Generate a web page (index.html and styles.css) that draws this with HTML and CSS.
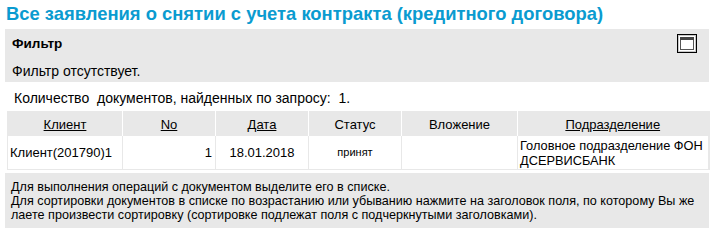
FILE: index.html
```html
<!DOCTYPE html>
<html lang="ru">
<head>
<meta charset="utf-8">
<title>Все заявления</title>
<link rel="stylesheet" href="styles.css">
</head>
<body>
<h1 class="title">Все заявления о снятии с учета контракта (кредитного договора)</h1>
<div class="filter">
  <div class="filter-head">
    <span class="filter-name">Фильтр</span>
    <svg class="filter-icon" width="20" height="19" viewBox="0 0 20 19">
      <rect x="0.5" y="0.5" width="19" height="18" fill="#fff" stroke="#000"/>
      <rect x="1.5" y="1.5" width="17" height="16" fill="none" stroke="#c8c8c8"/>
      <rect x="3.5" y="3.5" width="13" height="12" fill="#fff" stroke="#555"/>
      <rect x="3" y="3" width="14" height="3" fill="#444"/>
    </svg>
  </div>
  <div class="filter-text">Фильтр отсутствует.</div>
</div>
<div class="count">Количество&nbsp; документов, найденных по запросу:&nbsp; 1.</div>
<table class="grid">
  <colgroup>
    <col class="c-client"><col class="c-no"><col class="c-date"><col class="c-status"><col class="c-att"><col class="c-dept">
  </colgroup>
  <thead>
    <tr>
      <th><span class="sort">Клиент</span></th>
      <th><span class="sort">No</span></th>
      <th><span class="sort">Дата</span></th>
      <th>Статус</th>
      <th>Вложение</th>
      <th><span class="sort">Подразделение</span></th>
    </tr>
  </thead>
  <tbody>
    <tr>
      <td>Клиент(201790)1</td>
      <td class="num">1</td>
      <td class="center">18.01.2018</td>
      <td class="center small">принят</td>
      <td></td>
      <td class="dept">Головное подразделение ФОН ДСЕРВИСБАНК</td>
    </tr>
  </tbody>
</table>
<div class="hint">
  Для выполнения операций с документом выделите его в списке.<br>
  Для сортировки документов в списке по возрастанию или убыванию нажмите на заголовок поля, по которому Вы же лаете произвести сортировку (сортировке подлежат поля с подчеркнутыми заголовками).
</div>
</body>
</html>
```

FILE: styles.css
```css
html, body {
  margin: 0;
  padding: 0;
  background: #fff;
  font-family: "Liberation Sans", Arial, sans-serif;
  color: #000;
}
.title {
  margin: 0;
  padding: 3px 0 0 6px;
  height: 26px;
  font-size: 18.4px;
  line-height: 22px;
  font-weight: bold;
  color: #0a9bd0;
  white-space: nowrap;
}
.filter {
  margin: 0 2px 0 5px;
  background: #e8e8e8;
  height: 53px;
}
.filter-head {
  display: flex;
  justify-content: space-between;
  align-items: center;
  height: 28px;
  padding: 0 12px 0 7px;
}
.filter-name {
  font-size: 13.5px;
  font-weight: bold;
  padding-top: 1px;
}
.filter-icon {
  display: block;
  margin-top: 1px;
}
.filter-text {
  font-size: 14px;
  line-height: 16px;
  padding: 6px 0 0 7px;
}
.count {
  font-size: 14px;
  line-height: 16px;
  padding: 8px 0 0 14px;
  height: 21px;
}
.grid {
  margin: 0 2px 0 7px;
  width: 702px;
  table-layout: fixed;
  border-collapse: collapse;
  border: 1px solid #e8e8e8;
  border-right-width: 2px;
  font-size: 13px;
}
.c-client { width: 115px; }
.c-no { width: 93px; }
.c-date { width: 93px; }
.c-status { width: 93px; }
.c-att { width: 116px; }
.c-dept { width: 191px; }
.grid th {
  background: #e8e8e8;
  font-weight: normal;
  height: 24px;
  padding: 0 2px;
  text-align: center;
  border-right: 1px solid #fff;
  line-height: 15px;
}
.grid th:last-child { border-right: none; }
.sort { text-decoration: underline; }
.grid td {
  background: #fff;
  height: 31px;
  padding: 0 2px;
  border-right: 1px solid #e8e8e8;
  border-bottom: 1px solid #e8e8e8;
  line-height: 15px;
  vertical-align: middle;
}
.grid td.num { text-align: right; padding-right: 3px; }
.grid td.center { text-align: center; }
.grid td.small { font-size: 11px; }
.grid td.dept { padding: 1px 1px 1px 2px; font-size: 12.8px; }
.hint {
  margin: 3px 2px 0 5px;
  background: #e8e8e8;
  font-size: 12.6px;
  line-height: 14px;
  padding: 7px 10px 6px 6px;
}
```
